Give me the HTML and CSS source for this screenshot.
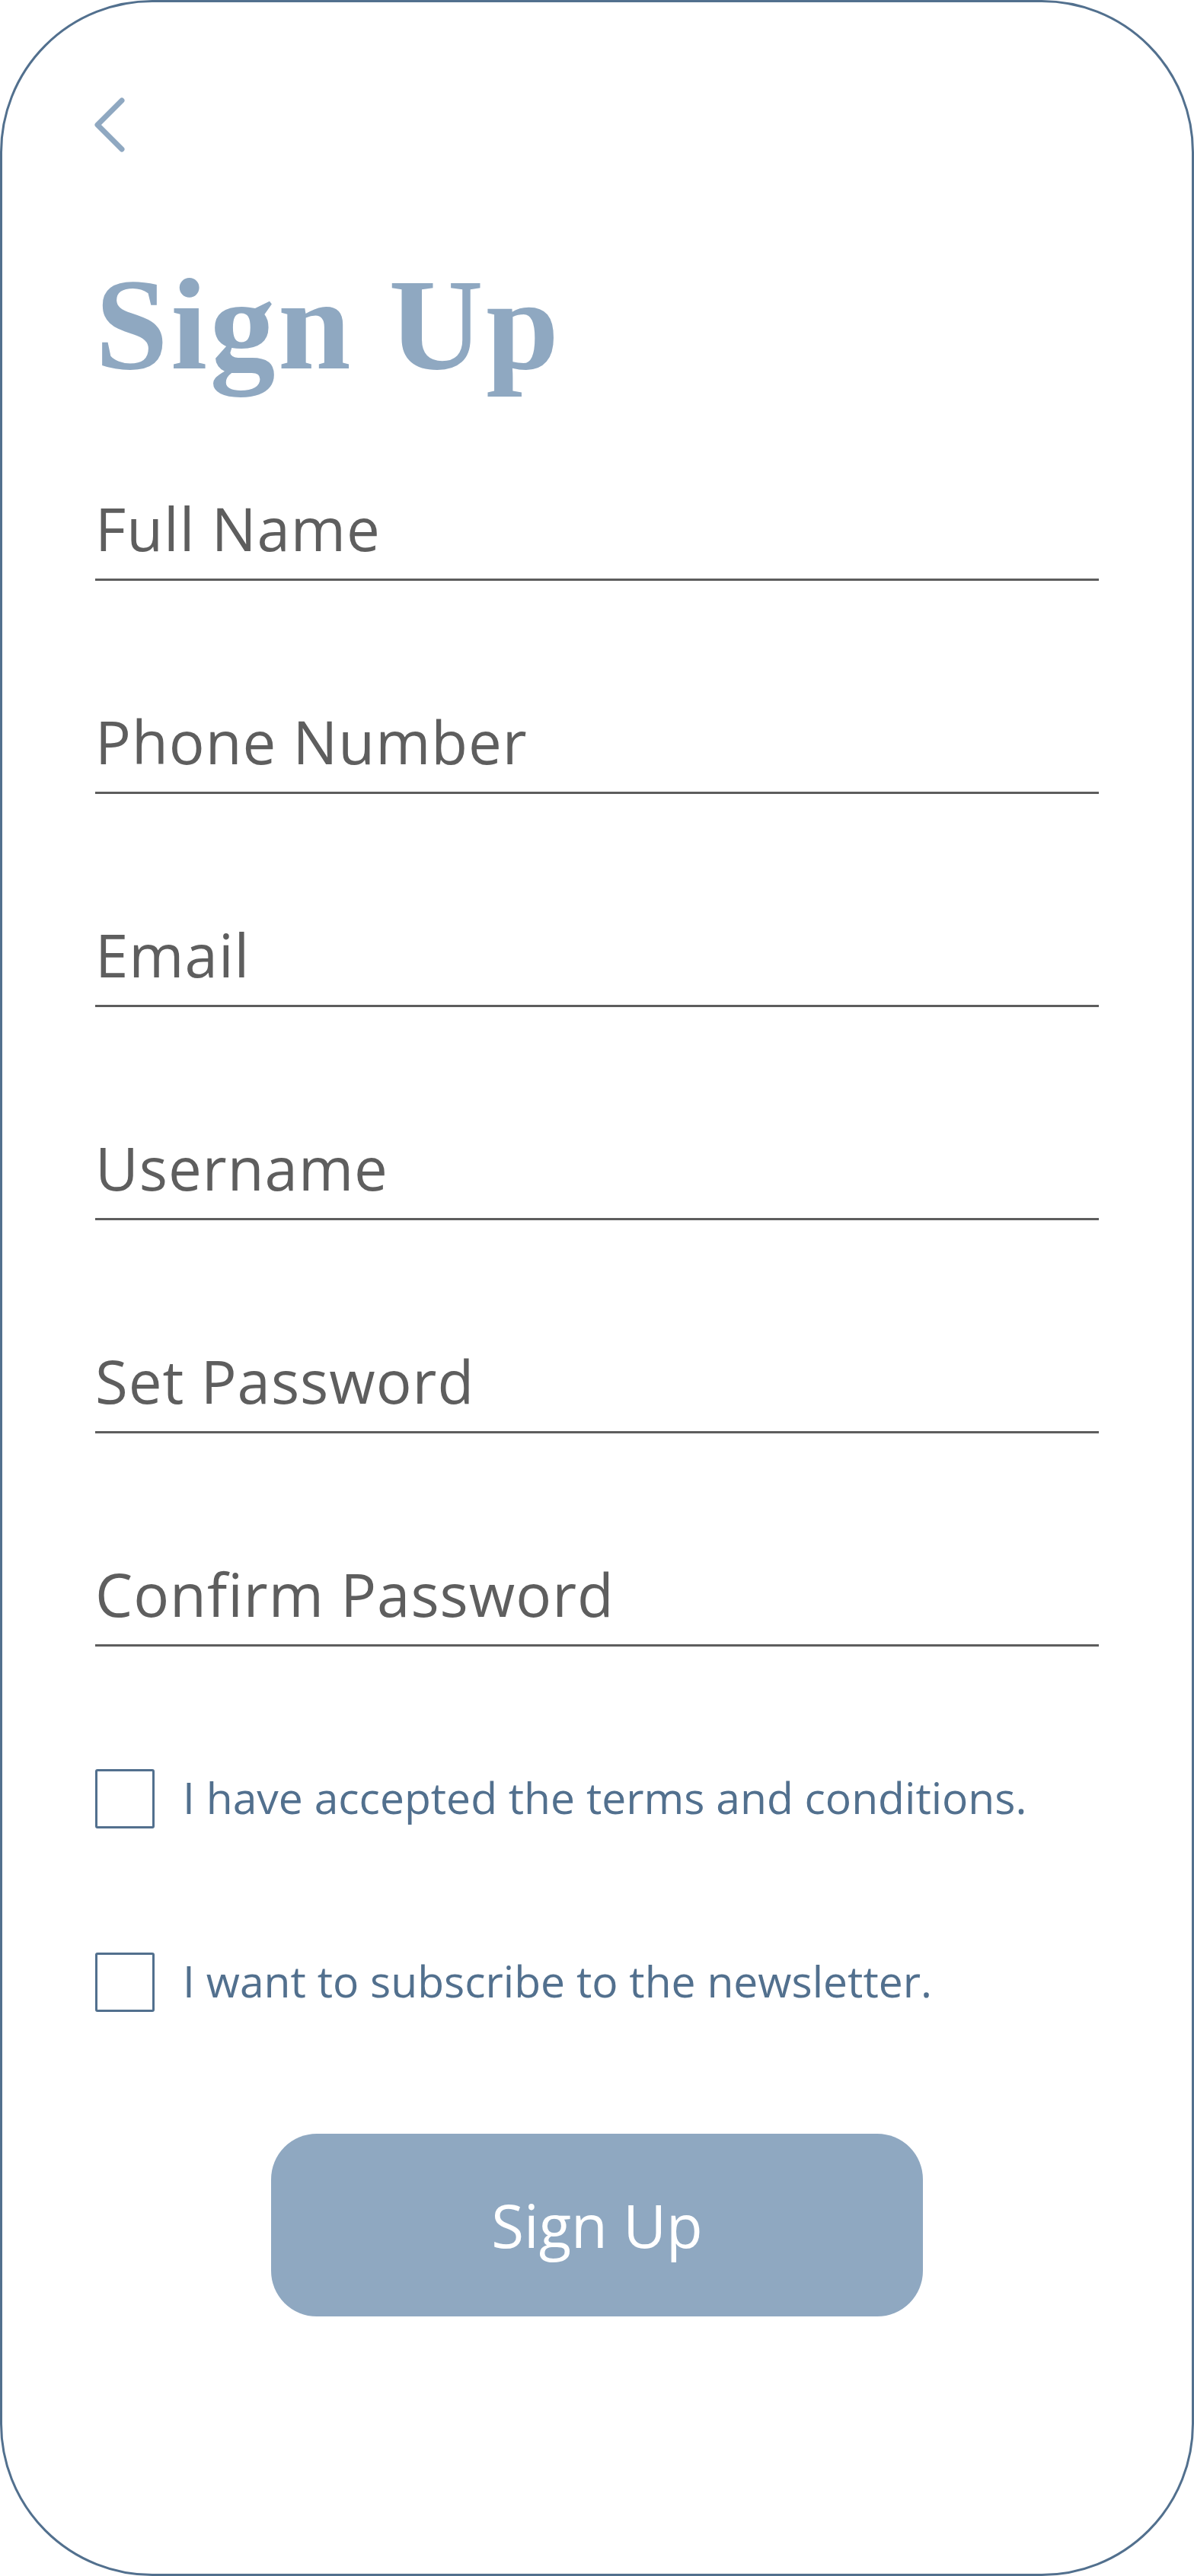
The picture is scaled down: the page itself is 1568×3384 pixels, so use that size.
FILE: index.html
```html
<!DOCTYPE html>
<html lang="en">
<head>
<meta charset="utf-8">
<title>Sign Up</title>
<link rel="stylesheet" href="styles.css">
</head>
<body>
<div class="phone">
  <a class="back" href="#" aria-label="Back">
    <svg width="48" height="76" viewBox="0 0 48 76"><polyline points="40,6 8,38 40,70" fill="none" stroke="#8fa8c1" stroke-width="7" stroke-linecap="round" stroke-linejoin="round"/></svg>
  </a>
  <h1 class="title">Sign Up</h1>
  <form class="form">
    <div class="fields">
      <div class="field"><span class="label">Full Name</span></div>
      <div class="field"><span class="label">Phone Number</span></div>
      <div class="field"><span class="label">Email</span></div>
      <div class="field"><span class="label">Username</span></div>
      <div class="field"><span class="label">Set Password</span></div>
      <div class="field"><span class="label">Confirm Password</span></div>
    </div>
    <div class="checks">
      <label class="check"><input type="checkbox" class="box"><span class="check-text">I have accepted the terms and conditions.</span></label>
      <label class="check"><input type="checkbox" class="box"><span class="check-text">I want to subscribe to the newsletter.</span></label>
    </div>
    <div class="actions"><button type="button" class="btn">Sign Up</button></div>
  </form>
</div>
</body>
</html>
```
FILE: styles.css
```css
html, body {
  margin: 0;
  padding: 0;
  background: #ffffff;
}
.phone {
  box-sizing: border-box;
  width: 1568px;
  height: 3384px;
  border: 3px solid #52708e;
  border-radius: 200px;
  padding: 123px 122px 0 122px;
  display: flex;
  flex-direction: column;
  font-family: "Open Sans", "Noto Sans", sans-serif;
}
.back {
  display: block;
  width: 48px;
  height: 76px;
  margin-left: -5px;
}
.back svg {
  display: block;
}
.title {
  margin: 138px 0 0 0;
  font-family: "Liberation Serif", serif;
  font-weight: 700;
  font-size: 172px;
  line-height: 172px;
  height: 172px;
  color: #8fa8c1;
  letter-spacing: 3.5px;
}
.form {
  margin: 143px 0 0 0;
  display: flex;
  flex-direction: column;
}
.fields {
  display: flex;
  flex-direction: column;
  gap: 172px;
}
.field {
  height: 78px;
  padding-bottom: 27px;
  border-bottom: 3px solid #5d5d5d;
}
.label {
  display: block;
  font-size: 78px;
  line-height: 78px;
  color: #5e5e5e;
  letter-spacing: 1px;
}
.checks {
  display: flex;
  flex-direction: column;
  gap: 163px;
  margin-top: 161px;
}
.check {
  display: flex;
  align-items: center;
  gap: 37px;
}
.box {
  appearance: none;
  -webkit-appearance: none;
  box-sizing: border-box;
  width: 78px;
  height: 78px;
  margin: 0;
  border: 3px solid #52708e;
  border-radius: 3px;
  background: #fff;
  flex: none;
}
.check-text {
  font-size: 57px;
  line-height: 57px;
  color: #52708e;
  margin-top: -4px;
}
.actions {
  display: flex;
  justify-content: center;
  margin-top: 160px;
}
.btn {
  width: 856px;
  height: 240px;
  border: none;
  border-radius: 60px;
  background: #8fa8c1;
  color: #ffffff;
  font-family: "Open Sans", "Noto Sans", sans-serif;
  font-size: 78px;
  line-height: 78px;
  padding: 0;
}
```
